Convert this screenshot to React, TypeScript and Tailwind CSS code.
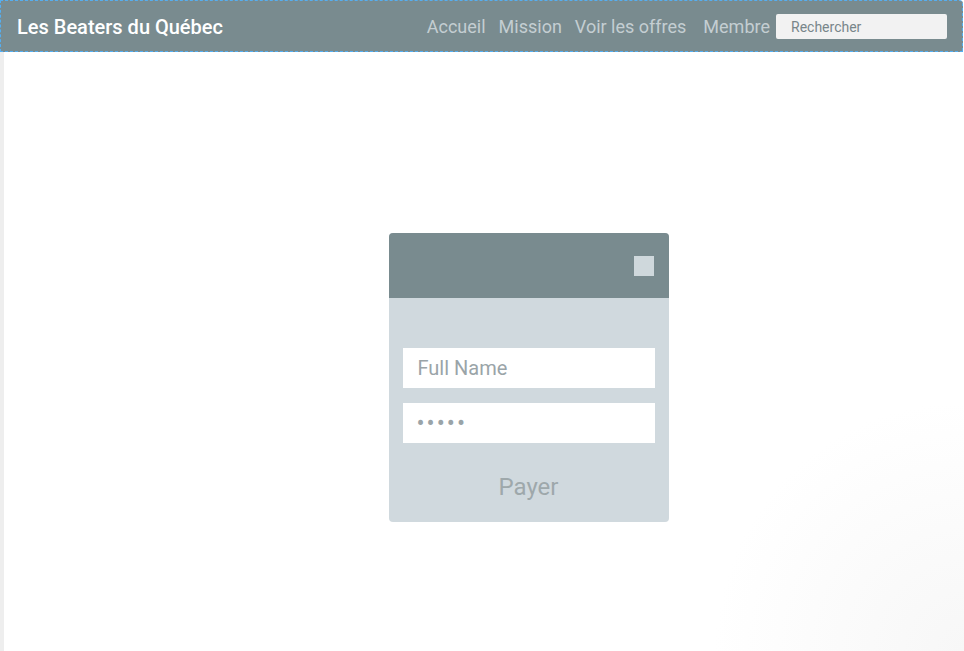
export default function App() {
  return (
    <div className="min-h-[651px] w-[964px] bg-white flex flex-col font-['Roboto',sans-serif] relative overflow-hidden">
      <nav className="h-[52px] w-[963px] flex items-center bg-[#798b8f] border border-dashed border-[#55aef0] rounded-tr-[4px] pl-4 pr-[15px]">
        <span className="text-white text-[20px] font-medium pt-[1px]">Les Beaters du Québec</span>
        <div className="ml-auto flex items-center text-[18px] text-[#c4ced2] pt-[1px]">
          <a className="mr-[13px]">Accueil</a>
          <a className="mr-[13px]">Mission</a>
          <a className="mr-[17px]">Voir les offres</a>
          <a className="mr-[6px]">Membre</a>
          <input
            placeholder="Rechercher"
            className="w-[171px] h-[25px] bg-[#f2f2f2] rounded-[2px] px-[15px] text-[14px] text-[#78868a] placeholder:text-[#78868a] outline-none"
          />
        </div>
      </nav>
      <div className="flex-1 flex">
        <div className="w-[4px] bg-[#eeeeee]"></div>
        <div className="flex-1 flex justify-center pt-[181px] pr-[4px] bg-[radial-gradient(circle_at_100%_100%,#f7f7f7_0%,#ffffff_22%)]">
          <div className="w-[280px] h-[289px] rounded-[4px] overflow-hidden bg-[#d0d9de] flex flex-col ml-[93px]">
            <div className="h-[65px] bg-[#798b8f] flex justify-end pt-[23px] pr-[15px]">
              <div className="w-[20px] h-[20px] bg-[#cfd8dc]"></div>
            </div>
            <div className="flex flex-col px-[14px] pt-[50px]">
              <input
                placeholder="Full Name"
                className="h-[40px] bg-white px-[15px] text-[20px] text-[#9aa4a8] placeholder:text-[#9aa4a8] outline-none"
              />
              <input
                type="password"
                defaultValue="12345"
                className="h-[40px] mt-[15px] bg-white px-[14px] text-[24px] text-[#9aa4a8] outline-none tracking-[2px]"
              />
              <button className="mt-[26px] text-[24px] text-[#9ea8ab] text-center">Payer</button>
            </div>
          </div>
        </div>
      </div>
    </div>
  );
}
